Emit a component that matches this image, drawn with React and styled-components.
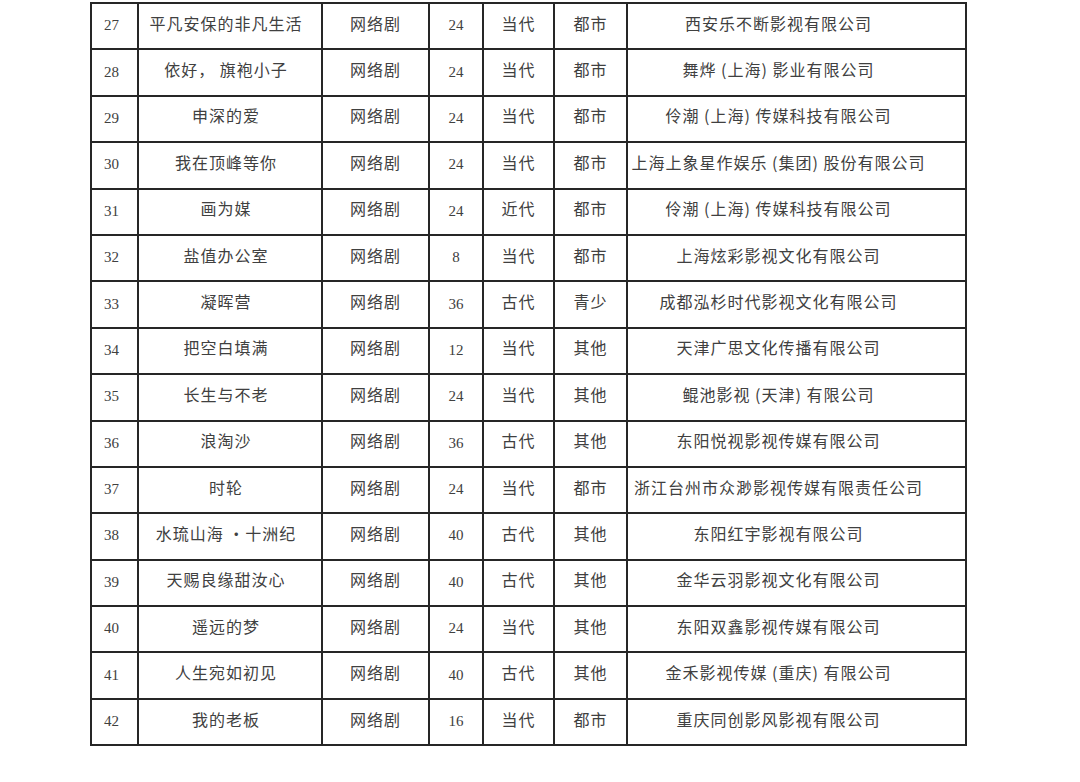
import React from "react";
import styled, { createGlobalStyle } from "styled-components";

const GlobalStyles = createGlobalStyle`
  body {
    margin: 0;
    background: #ffffff;
    font-family: "Noto Sans CJK SC", "Liberation Serif", serif;
  }
`;

const rows = [
  [27, "平凡安保的非凡生活", "网络剧", 24, "当代", "都市", "西安乐不断影视有限公司"],
  [28, "依好，  旗袍小子", "网络剧", 24, "当代", "都市", "舞烨 (上海) 影业有限公司"],
  [29, "申深的爱", "网络剧", 24, "当代", "都市", "伶潮 (上海) 传媒科技有限公司"],
  [30, "我在顶峰等你", "网络剧", 24, "当代", "都市", "上海上象星作娱乐 (集团) 股份有限公司"],
  [31, "画为媒", "网络剧", 24, "近代", "都市", "伶潮 (上海) 传媒科技有限公司"],
  [32, "盐值办公室", "网络剧", 8, "当代", "都市", "上海炫彩影视文化有限公司"],
  [33, "凝晖营", "网络剧", 36, "古代", "青少", "成都泓杉时代影视文化有限公司"],
  [34, "把空白填满", "网络剧", 12, "当代", "其他", "天津广思文化传播有限公司"],
  [35, "长生与不老", "网络剧", 24, "当代", "其他", "鲲池影视 (天津) 有限公司"],
  [36, "浪淘沙", "网络剧", 36, "古代", "其他", "东阳悦视影视传媒有限公司"],
  [37, "时轮", "网络剧", 24, "当代", "都市", "浙江台州市众渺影视传媒有限责任公司"],
  [38, "水琉山海 ·十洲纪", "网络剧", 40, "古代", "其他", "东阳红宇影视有限公司"],
  [39, "天赐良缘甜汝心", "网络剧", 40, "古代", "其他", "金华云羽影视文化有限公司"],
  [40, "遥远的梦", "网络剧", 24, "当代", "其他", "东阳双鑫影视传媒有限公司"],
  [41, "人生宛如初见", "网络剧", 40, "古代", "其他", "金禾影视传媒 (重庆) 有限公司"],
  [42, "我的老板", "网络剧", 16, "当代", "都市", "重庆同创影风影视有限公司"],
];

const colWidths = [47, 184, 107, 54, 71, 73, 339];

const Page = styled.div`
  padding: 2px 0 0 90px;
`;

const Table = styled.table`
  border-collapse: collapse;
  table-layout: fixed;
  width: 875px;
  border: 2px solid #262626;
`;

const Row = styled.tr`
  height: 46.4px;
`;

const Cell = styled.td`
  border: 2px solid #262626;
  padding: 0 ${(p) => p.$shift || 0}px ${(p) => (p.$num ? "1px" : "7px")} 0;
  text-align: center;
  vertical-align: middle;
  white-space: nowrap;
  color: #404040;
  font-family: ${(p) =>
    p.$num
      ? `"Liberation Serif", "DejaVu Serif", serif`
      : `"Noto Sans CJK SC", sans-serif`};
  font-size: ${(p) => (p.$num ? "15px" : "16px")};
  letter-spacing: ${(p) => (p.$num ? "0" : "1px")};
  font-weight: 400;
`;

export default function App() {
  return (
    <Page>
      <GlobalStyles />
      <Table>
        <colgroup>
          {colWidths.map((w, i) => (
            <col key={i} style={{ width: w }} />
          ))}
        </colgroup>
        <tbody>
          {rows.map((r) => (
            <Row key={r[0]}>
              <Cell $num $shift={6}>{r[0]}</Cell>
              <Cell $shift={8}>{r[1]}</Cell>
              <Cell>{r[2]}</Cell>
              <Cell $num>{r[3]}</Cell>
              <Cell>{r[4]}</Cell>
              <Cell>{r[5]}</Cell>
              <Cell $shift={36}>{r[6]}</Cell>
            </Row>
          ))}
        </tbody>
      </Table>
    </Page>
  );
}
